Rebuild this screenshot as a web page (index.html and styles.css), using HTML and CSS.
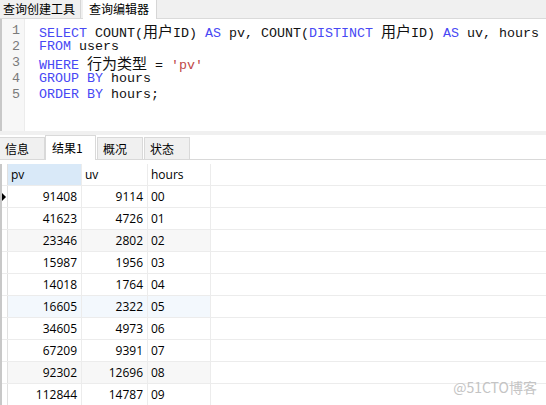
FILE: index.html
```html
<!DOCTYPE html>
<html lang="zh">
<head>
<meta charset="utf-8">
<link rel="stylesheet" href="styles.css">
</head>
<body>
<div class="app">
  <div class="topbar">
    <div class="ttab">查询创建工具</div>
    <div class="ttab active">查询编辑器</div>
  </div>
  <div class="editor">
    <div class="gutter">
      <div>1</div><div>2</div><div>3</div><div>4</div><div>5</div>
    </div>
    <div class="code">
      <div class="ln"><span class="kw">SELECT</span> COUNT(<span class="cn">用户</span>ID) <span class="kw">AS</span> pv, COUNT(<span class="kw">DISTINCT</span> <span class="cn">用户</span>ID) <span class="kw">AS</span> uv, hours</div>
      <div class="ln"><span class="kw">FROM</span> users</div>
      <div class="ln"><span class="kw">WHERE</span> <span class="cn">行为类型</span> = <span class="str">'pv'</span></div>
      <div class="ln"><span class="kw">GROUP BY</span> hours</div>
      <div class="ln"><span class="kw">ORDER BY</span> hours;</div>
    </div>
  </div>
  <div class="splitter"></div>
  <div class="rtabs">
    <div class="rtab">信息</div>
    <div class="rtab active">结果1</div>
    <div class="rtab">概况</div>
    <div class="rtab">状态</div>
  </div>
  <div class="grid">
    <div class="row head">
      <div class="ind"></div>
      <div class="c c1 sel">pv</div>
      <div class="c c2">uv</div>
      <div class="c c3">hours</div>
    </div>
    <div class="row"><div class="ind"><span class="arrow"></span></div><div class="c c1 num">91408</div><div class="c c2 num">9114</div><div class="c c3">00</div></div>
    <div class="row"><div class="ind"></div><div class="c c1 num">41623</div><div class="c c2 num">4726</div><div class="c c3">01</div></div>
    <div class="row alt"><div class="ind"></div><div class="c c1 num">23346</div><div class="c c2 num">2802</div><div class="c c3">02</div></div>
    <div class="row"><div class="ind"></div><div class="c c1 num">15987</div><div class="c c2 num">1956</div><div class="c c3">03</div></div>
    <div class="row"><div class="ind"></div><div class="c c1 num">14018</div><div class="c c2 num">1764</div><div class="c c3">04</div></div>
    <div class="row hov"><div class="ind"></div><div class="c c1 num">16605</div><div class="c c2 num">2322</div><div class="c c3">05</div></div>
    <div class="row"><div class="ind"></div><div class="c c1 num">34605</div><div class="c c2 num">4973</div><div class="c c3">06</div></div>
    <div class="row"><div class="ind"></div><div class="c c1 num">67209</div><div class="c c2 num">9391</div><div class="c c3">07</div></div>
    <div class="row alt"><div class="ind"></div><div class="c c1 num">92302</div><div class="c c2 num">12696</div><div class="c c3">08</div></div>
    <div class="row"><div class="ind"></div><div class="c c1 num">112844</div><div class="c c2 num">14787</div><div class="c c3">09</div></div>
  </div>
  <div class="watermark">@51CTO博客</div>
</div>
</body>
</html>
```
FILE: styles.css
```css
* { box-sizing: border-box; }
html, body { margin: 0; padding: 0; background: #fff; }
body { width: 546px; height: 405px; overflow: hidden; }
.app {
  position: relative;
  width: 546px;
  height: 405px;
  font-family: "Open Sans", "Noto Sans CJK SC", sans-serif;
  font-size: 12px;
  color: #000;
}
.topbar {
  height: 19px;
  background: #f0f0f0;
  border-bottom: 1px solid #dadada;
  display: flex;
  align-items: flex-end;
}
.ttab {
  height: 18px;
  line-height: 17px;
  padding: 0 3px;
  font-family: "Noto Sans CJK SC", sans-serif;
  font-size: 12px;
  background: #f0f0f0;
  border-right: 1px solid #d6d6d6;
  width: 81px;
}
.ttab.active {
  background: #fff;
  width: 74px;
  padding-left: 6px;
  margin-left: 2px;
  height: 19px;
  margin-bottom: -1px;
}
.editor {
  height: 112px;
  display: flex;
  border-left: 2px solid #c8c8c8;
  overflow: hidden;
}
.gutter {
  width: 23px;
  flex: none;
  background: #f7f7f7;
  border-right: 1px solid #ececec;
  padding-top: 4px;
  font-family: "Liberation Mono", monospace;
  font-size: 13.33px;
  line-height: 16px;
  color: #7a7a7a;
  text-align: right;
  padding-right: 4px;
}
.code {
  padding-top: 4px;
  padding-left: 14px;
  font-family: "Liberation Mono", monospace;
  font-size: 13.33px;
  line-height: 16px;
  color: #111;
}
.ln { white-space: pre; height: 16px; }
.kw { color: #4848f4; }
.str { color: #c04848; }
.cn { font-family: "Noto Sans CJK SC", sans-serif; font-size: 15px; line-height: 1; }
.splitter { height: 4px; background: #f0f0f0; }
.rtabs {
  height: 25px;
  display: flex;
  align-items: flex-end;
  border-bottom: 1px solid #d9d9d9;
}
.rtab {
  height: 22px;
  line-height: 21px;
  background: #f0f0f0;
  border: 1px solid #d9d9d9;
  border-bottom: none;
  margin-right: 1px;
  font-family: "Noto Sans CJK SC", sans-serif;
  font-size: 12px;
  padding-left: 5px;
  width: 46px;
}
.rtab:first-child { border-left: none; width: 45px; margin-right: 0; }
.rtab.active {
  background: #fff;
  height: 25px;
  line-height: 24px;
  margin-bottom: -1px;
  width: 51px;
  padding-left: 6px;
  margin-right: 1px;
}
.grid {
  margin-top: 4px;
  border-left: 2px solid #c8c8c8;
}
.row {
  display: flex;
  height: 22px;
  border-bottom: 1px solid #ececec;
}
.row.alt .c { background: #f7f7f7; }
.row.hov .c { background: #f3f8fd; }
.ind {
  width: 6px;
  flex: none;
  border-right: 1px solid #e0e0e0;
  position: relative;
}
.arrow {
  position: absolute;
  left: 0;
  top: 7px;
  width: 0; height: 0;
  border-left: 4px solid #000;
  border-top: 4px solid transparent;
  border-bottom: 4px solid transparent;
}
.c {
  flex: none;
  border-right: 1px solid #ececec;
  line-height: 21px;
  padding: 0 3px;
  white-space: nowrap;
}
.c1 { width: 74px; }
.c2 { width: 66px; }
.c3 { width: 63px; }
.c.sel { background: #d9e9f8; }
.num { text-align: right; padding-right: 4px; }
.watermark {
  position: absolute;
  right: 9px;
  bottom: 8px;
  font-family: "Noto Sans CJK SC", sans-serif;
  font-size: 14px;
  color: #c4c4c4;
}
```
